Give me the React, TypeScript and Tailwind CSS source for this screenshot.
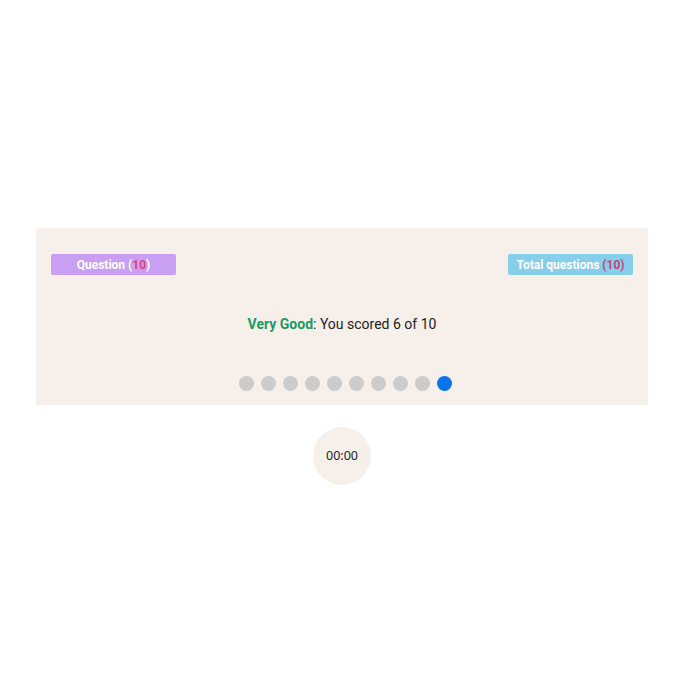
import React from "react";

export default function App() {
  const dots = Array.from({ length: 10 }, (_, i) => i);
  return (
    <div
      className="w-[678px] h-[678px] bg-white flex flex-col items-center pt-[228px] pl-[6px]"
      style={{ fontFamily: "Roboto, 'Liberation Sans', sans-serif" }}
    >
      <div className="w-[612px] bg-[#f6efea] pt-[26px] pb-[14px] px-[15px] flex flex-col">
        <div className="flex justify-between">
          <div className="w-[125px] h-[21px] rounded-[2px] bg-[#c99ff4] text-white text-[12px] font-bold flex items-center justify-center">
            <span>
              Question (<span className="text-[#e0437c]">10</span>)
            </span>
          </div>
          <div className="w-[125px] h-[21px] rounded-[2px] bg-[#87ceeb] text-white text-[12px] font-bold flex items-center justify-center">
            <span>
              Total questions <span className="text-[#c2447a]">(10)</span>
            </span>
          </div>
        </div>
        <div className="mt-[40px] text-center text-[14px] leading-[18px] text-[#222]">
          <span className="font-bold text-[#1c9a62]">Very Good</span>: You scored 6 of 10
        </div>
        <div className="mt-[43px] flex justify-center gap-[7px] pl-[6px]">
          {dots.map((i) => (
            <div
              key={i}
              className={
                i === 9
                  ? "w-[15px] h-[15px] rounded-full bg-[#0a74ec]"
                  : "w-[15px] h-[15px] rounded-full bg-[#cccccc]"
              }
            />
          ))}
        </div>
      </div>
      <div
        className="mt-[22px] w-[58px] h-[58px] rounded-full bg-[#f6efea] flex items-center justify-center text-[12.5px] text-[#222]"
        style={{ fontFamily: "'Noto Sans', 'Open Sans', sans-serif" }}
      >
        00:00
      </div>
    </div>
  );
}
